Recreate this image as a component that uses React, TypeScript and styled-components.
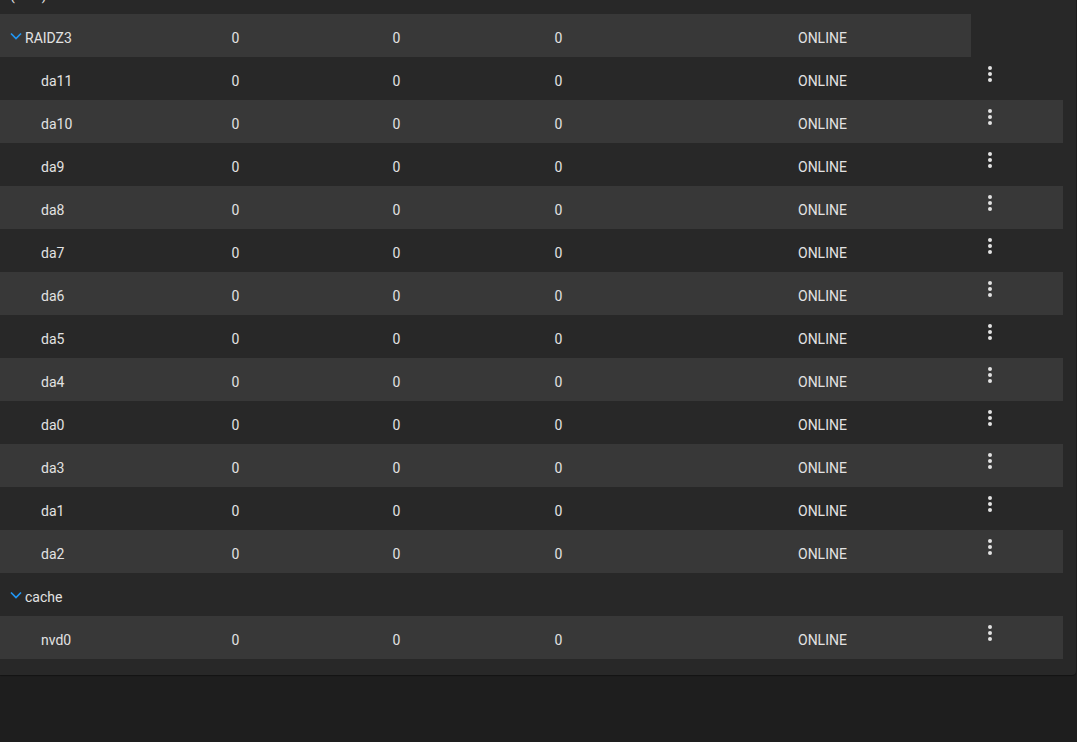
import React from "react";
import styled, { createGlobalStyle } from "styled-components";

const Global = createGlobalStyle`
  html, body { margin: 0; padding: 0; background: #1e1e1e; }
  body { font-family: Roboto, "Noto Sans", sans-serif; overflow: hidden; }
`;

const Page = styled.div`
  width: 1077px;
  height: 742px;
  background: #1e1e1e;
  overflow: hidden;
`;

const Card = styled.div`
  width: 1076px;
  background: #282828;
  padding: 0 13px 16px 0;
  box-sizing: border-box;
  border-radius: 0 0 4px 0;
  box-shadow: 0 1px 1px rgba(0, 0, 0, 0.35);
  margin-top: -29px;
`;

const Row = styled.div`
  display: grid;
  grid-template-columns: 231.5px 161px 162px 243.5px 173px 92px;
  height: 43px;
  color: #e2e2e2;
  font-size: 14px;
`;

const Cell = styled.div<{ $shade?: boolean }>`
  display: flex;
  align-items: center;
  padding-top: 4px;
  box-sizing: border-box;
  background: ${(p) => (p.$shade ? "#383838" : "transparent")};
  white-space: nowrap;
`;

const NameCell = styled(Cell)<{ $indent: number }>`
  padding-left: ${(p) => p.$indent}px;
`;

const Chevron = styled.svg`
  width: 12px;
  height: 8px;
  margin-right: 3px;
  margin-top: -3px;
  flex: none;
`;

const ActionCell = styled.div<{ $shade?: boolean }>`
  background: ${(p) => (p.$shade ? "#383838" : "transparent")};
  padding: 5px 0 0 7px;
  box-sizing: border-box;
`;

const Dots = styled.svg`
  width: 24px;
  height: 24px;
  display: block;
`;

type R = {
  name: string;
  kind: "pool" | "group" | "disk";
  shade?: boolean;
  stats?: boolean;
};

const rows: R[] = [
  { name: "(tank)", kind: "pool" },
  { name: "RAIDZ3", kind: "group", shade: true, stats: true },
  ...["da11", "da10", "da9", "da8", "da7", "da6", "da5", "da4", "da0", "da3", "da1", "da2"].map(
    (n, i) => ({ name: n, kind: "disk" as const, shade: i % 2 === 1, stats: true })
  ),
  { name: "cache", kind: "group" },
  { name: "nvd0", kind: "disk", shade: true, stats: true },
];

const ChevronIcon = () => (
  <Chevron viewBox="0 0 12 8">
    <path d="M1 1.5 L6 6.5 L11 1.5" fill="none" stroke="#2196f3" strokeWidth="1.7" />
  </Chevron>
);

const MoreVert = () => (
  <Dots viewBox="0 0 24 24">
    <circle cx="12" cy="6" r="2" fill="#e2e2e2" />
    <circle cx="12" cy="12" r="2" fill="#e2e2e2" />
    <circle cx="12" cy="18" r="2" fill="#e2e2e2" />
  </Dots>
);

export default function App() {
  return (
    <Page>
      <Global />
      <Card>
        {rows.map((r) => (
          <Row key={r.name}>
            <NameCell $shade={r.shade} $indent={r.kind === "disk" ? 41 : 10}>
              {r.kind === "group" && <ChevronIcon />}
              {r.name}
            </NameCell>
            <Cell $shade={r.shade}>{r.stats ? "0" : ""}</Cell>
            <Cell $shade={r.shade}>{r.stats ? "0" : ""}</Cell>
            <Cell $shade={r.shade}>{r.stats ? "0" : ""}</Cell>
            <Cell $shade={r.shade}>{r.stats ? "ONLINE" : ""}</Cell>
            {r.kind === "disk" ? (
              <ActionCell $shade={r.shade}>
                <MoreVert />
              </ActionCell>
            ) : (
              <div />
            )}
          </Row>
        ))}
      </Card>
    </Page>
  );
}
